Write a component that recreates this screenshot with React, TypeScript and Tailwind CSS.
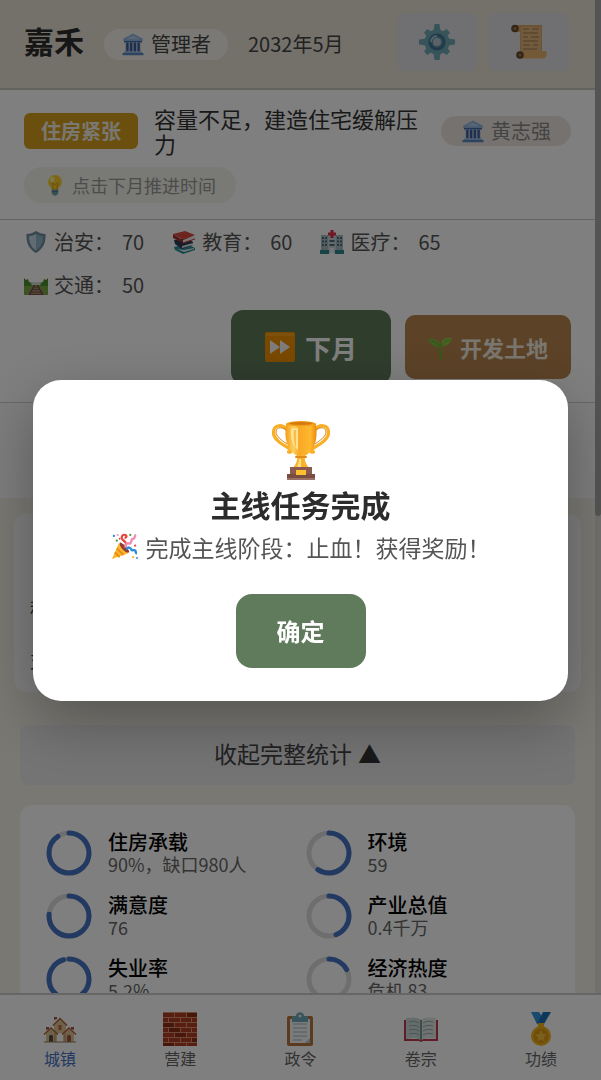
import { useState } from 'react'
import type { ReactNode } from 'react'

interface IconProps {
  className?: string
}

interface Metric {
  label: string
  value: string
  percent: number
}

const metrics: Metric[] = [
  { label: '住房承载', value: '90%，缺口980人', percent: 90 },
  { label: '环境', value: '59', percent: 59 },
  { label: '满意度', value: '76', percent: 76 },
  { label: '产业总值', value: '0.4千万', percent: 44 },
  { label: '失业率', value: '5.2%', percent: 95 },
  { label: '经济热度', value: '危机 83', percent: 17 },
]

function BankIcon({ className }: IconProps) {
  return (
    <svg viewBox="0 0 32 32" className={className} aria-hidden="true">
      <path d="M16 2 29 9v3H3V9z" fill="#8fb4de" />
      <path d="M16 4.500 25 9.500H7z" fill="#b5cdea" />
      <path d="M4 12h24v2H4z" fill="#3f6aa8" />
      <path d="M6 14h20v12H6z" fill="#a9bedb" />
      <path d="M7 14h3v12H7zM12 14h3v12h-3zM17 14h3v12h-3zM22 14h3v12h-3z" fill="#3c5d9a" />
      <path d="M4 26h24v2H4z" fill="#8fb4de" />
      <path d="M2 28h28v3H2z" fill="#5b86c0" />
    </svg>
  )
}

function GearIcon({ className }: IconProps) {
  return (
    <svg viewBox="0 0 36 36" className={className} aria-hidden="true">
      <g fill="#6fa9b5">
        <path d="M15.500 0h5l1 7h-7zM15.500 36h5l1-7h-7zM0 15.500v5l7 1v-7zM36 15.500v5l-7 1v-7z" />
        <path d="M5 8.500 8.500 5l5.500 4-5 5zM31 8.500 27.500 5 22 9l5 5zM5 27.500 8.500 31l5.500-4-5-5zM31 27.500 27.500 31 22 27l5-5z" />
        <circle cx="18" cy="18" r="12.500" />
      </g>
      <circle cx="18" cy="18" r="9" fill="#5a92a4" />
      <circle cx="18" cy="18" r="7" fill="none" stroke="#3e6f91" strokeWidth="2" />
      <path d="M12 18a6 6 0 0 1 6-6" fill="none" stroke="#9ac8d4" strokeWidth="2" />
      <circle cx="18" cy="18" r="4" fill="#b9c4cc" />
    </svg>
  )
}

function ScrollIcon({ className }: IconProps) {
  return (
    <svg viewBox="0 0 36 36" className={className} aria-hidden="true">
      <path d="M4 1h27v27H9V8H4z" fill="#d9a766" />
      <path d="M10 3h20v25H10z" fill="#e3b77c" />
      <path d="M9 27h26c1.500 2 .500 6-2 7.500H9z" fill="#e6b26c" />
      <circle cx="4" cy="4.500" r="3.800" fill="#68482c" />
      <circle cx="4" cy="4.500" r="1.600" fill="#a6794a" />
      <circle cx="9" cy="31" r="3.800" fill="#68482c" />
      <circle cx="9" cy="31" r="1.600" fill="#a6794a" />
      <path
        d="M12 5h6m3 0h7M12 9h15M12 13h5m3 0h8M12 17h15M12 21h7m3 0h5M12 25h14"
        stroke="#a37b4c"
        strokeWidth="1.200"
      />
    </svg>
  )
}

function BulbIcon({ className }: IconProps) {
  return (
    <svg viewBox="0 0 24 24" className={className} aria-hidden="true">
      <path d="M12 1a7.500 7.500 0 0 0-7.500 7.500c0 4 3.500 5.500 4 9h7c.500-3.500 4-5 4-9A7.500 7.500 0 0 0 12 1z" fill="#f6cf2c" />
      <path d="M10 17 9 10l3 1.500 3-1.500-1 7" fill="none" stroke="#e0951b" />
      <ellipse cx="9" cy="6" rx="2.500" ry="3" fill="#fff08c" />
      <path d="M8.500 17h7v4l-2 2.500h-3l-2-2.500z" fill="#6fa0a8" />
      <path d="M8.500 19h7" stroke="#4b7780" />
    </svg>
  )
}

function ShieldIcon({ className }: IconProps) {
  return (
    <svg viewBox="0 0 24 24" className={className} aria-hidden="true">
      <path d="M12 1c3 2 6 3 9.500 3 .500 9-2.500 15-9.500 19C5 19 2 13 2.500 4 6 4 9 3 12 1z" fill="#6f8f9c" />
      <path d="M12 4c2.500 1.300 4.500 2 7 2.300C19 13 16.500 17.500 12 20.500z" fill="#8fb4c6" />
      <path d="M12 4c-2.500 1.300-4.500 2-7 2.300C5 13 7.500 17.500 12 20.500z" fill="#c0d8e2" />
    </svg>
  )
}

function BooksIcon({ className }: IconProps) {
  return (
    <svg viewBox="0 0 24 24" className={className} aria-hidden="true">
      <path d="m2 17 13-3 8 4v2l-12 4-8-4z" fill="#2b8f9e" />
      <path d="m5 19 7 3 10-3v-1l-10 2z" fill="#e8e8e8" />
      <path d="m2 10 12-2 7 4v3l-11 4-7-5z" fill="#2d3f52" />
      <path d="m10 16 11-3v2l-11 3z" fill="#dfe3e6" />
      <path d="m1 4 12-3 10 4-11 5z" fill="#d84a3f" />
      <path d="M1 4v4l10 5v-3z" fill="#a8322b" />
      <path d="m11 10 12-4v3l-12 4z" fill="#eceff1" />
      <path d="m11 13 12-4" stroke="#c0392b" />
    </svg>
  )
}

function HospitalIcon({ className }: IconProps) {
  return (
    <svg viewBox="0 0 24 24" className={className} aria-hidden="true">
      <path d="M1 5h22v18H1z" fill="#a9b8be" />
      <path d="M8 3h8v20H8z" fill="#c6d0d4" />
      <path
        d="M2 7h2v2H2zM5 7h2v2H5zM2 10.500h2v2H2zM5 10.500h2v2H5zM2 14h2v2H2zM5 14h2v2H5zM17 7h2v2h-2zM20 7h2v2h-2zM17 10.500h2v2h-2zM20 10.500h2v2h-2zM17 14h2v2h-2zM20 14h2v2h-2zM9.500 10h5v2h-5zM9.500 14h5v2h-5z"
        fill="#4b6f80"
      />
      <path d="M10 18h4v5h-4z" fill="#e8eef0" />
      <path d="M0 20h9v4H0zM15 20h9v4h-9z" fill="#2f8a8f" />
      <path d="M10.500 0h3v2.500H16v3h-2.500V8h-3V5.500H8v-3h2.500z" fill="#e02e4c" />
    </svg>
  )
}

function RailwayIcon({ className }: IconProps) {
  return (
    <svg viewBox="0 0 24 24" className={className} aria-hidden="true">
      <path d="M0 9h24v13H0z" fill="#77a844" />
      <path d="M6 9h12v3H6z" fill="#cfdcd0" />
      <path d="m0 5 2 2 2-1 1 3 2 1 1 3H0zM24 5l-2 2-2-1-1 3-2 1-1 3h8z" fill="#4f8a2d" />
      <path d="M10 12h4l8 10H2z" fill="#a08c74" />
      <path d="M10.500 12 5 22M13.500 12 19 22" stroke="#54473c" strokeWidth="1.200" />
      <path d="M9.500 14h5M8.500 16.500h7M7 19h10M5.500 21.500h13" stroke="#7a4c35" strokeWidth="1.200" />
    </svg>
  )
}

function FastForwardIcon({ className }: IconProps) {
  return (
    <svg viewBox="0 0 30 30" className={className} aria-hidden="true">
      <rect width="30" height="30" rx="2" fill="#f59200" />
      <path d="M1 1h28v3H1z" fill="#ffb031" opacity=".5" />
      <path d="m5 8 10 7-10 7zM15 8l10 7-10 7z" fill="#fafafa" />
    </svg>
  )
}

function SeedlingIcon({ className }: IconProps) {
  return (
    <svg viewBox="0 0 24 24" className={className} aria-hidden="true">
      <path d="M13 23c-1-6-1-9 1-13" fill="none" stroke="#6fae35" strokeWidth="2.500" strokeLinecap="round" />
      <path d="M13 12C10 13 3 12 0 4c7-1 12 1 13 8z" fill="#7cba3c" />
      <path d="M13 11c0-6 3-9 11-8-2 6-5 8-11 8z" fill="#8fca45" />
      <path d="M13 11c2-3 5-5 8-6M12 11C9 8 6 6 3 6" fill="none" stroke="#5f9b2f" strokeWidth=".800" />
    </svg>
  )
}

function TrophyIcon({ className }: IconProps) {
  return (
    <svg viewBox="0 0 60 60" className={className} aria-hidden="true">
      <defs>
        <linearGradient id="cup" x1="0" x2="1">
          <stop offset="0" stopColor="#f59a12" />
          <stop offset=".25" stopColor="#fdd060" />
          <stop offset=".45" stopColor="#f9a825" />
          <stop offset=".8" stopColor="#ffb92e" />
          <stop offset="1" stopColor="#e98a10" />
        </linearGradient>
      </defs>
      <path
        d="M16 10C12 4 3 4 2.500 12c-.500 7 8 12 15 16 4 3 3 5 0 4M44 10c4-6 13-6 13.500 2 .500 7-8 12-15 16-4 3-3 5 0 4"
        fill="none"
        stroke="#f9ae24"
        strokeWidth="3.200"
        strokeLinecap="round"
      />
      <path d="M16 11C13 7 5 6 5 12c0 4 5 8 11 12M44 11c3-4 11-5 11 1 0 4-5 8-11 12" fill="none" stroke="#d98216" />
      <path d="M15 4c2-3 28-3 30 0 2 16-1 26-11 32h-8C16 30 13 20 15 4z" fill="url(#cup)" />
      <path d="M15 4c2-4 28-4 30 0-3 3-27 3-30 0z" fill="#f2a01c" />
      <ellipse cx="30" cy="3.500" rx="12" ry="1.500" fill="#d5780e" />
      <path d="M20 9c3-1 5-1 7-1v22c-5-3-8-12-7-21z" fill="#ffe9a8" opacity=".8" />
      <path d="M23 10h2v18c-2-4-3-12-2-18z" fill="#f9ae24" opacity=".7" />
      <path d="M26 35h8c-1 5 1 9 4 13H22c3-4 5-8 4-13z" fill="#fbb12a" />
      <path d="M25 37h10" stroke="#e08c1a" strokeWidth="2" strokeLinecap="round" />
      <path d="M28 39h2v8h-4c1-2 2-5 2-8z" fill="#ffe08a" />
      <path d="M19 47h22v8H19z" fill="#8a5a4e" />
      <path d="M16 54h28v5H16z" fill="#7a4d43" />
      <path d="M16 58h28v2H16z" fill="#9b7166" />
      <path d="M25 50h10v5H25z" fill="#fdc02f" />
    </svg>
  )
}

function PartyIcon({ className }: IconProps) {
  return (
    <svg viewBox="0 0 28 28" className={className} aria-hidden="true">
      <path d="M8 11 1 27l17-6c-2-5-6-9-10-10z" fill="#fbb62c" />
      <path d="m6 16 7 7M4 20l5 5" stroke="#e98b1b" strokeWidth="2" />
      <path d="M9 10c2-1 10 7 10 10-3 2-11-6-10-10z" fill="#8c3e36" />
      <path d="M14 15c3-4 1-6-2-8-2-3 0-6 3-5 2 1 1 3-1 3" fill="none" stroke="#e8453c" strokeWidth="2.200" />
      <path d="M15 15c0-4 2-5 4-4 3 0 1-5 4-5 2 0 1-3 3-4" fill="none" stroke="#ef8fb5" strokeWidth="2.500" />
      <path d="M16 17c2-3 4-2 5 0s3 0 4 1 0 3 2 3" fill="none" stroke="#2c8fd6" strokeWidth="2.500" />
      <circle cx="3" cy="3" r="1.200" fill="#2c8fd6" />
      <circle cx="7" cy="2" r="1" fill="#ef8fb5" />
      <circle cx="6" cy="8" r="1.200" fill="#43a047" />
      <circle cx="20" cy="2" r="1.200" fill="#43a047" />
      <circle cx="25" cy="13" r="1.200" fill="#e8453c" />
      <circle cx="23" cy="25" r="1.200" fill="#fbb62c" />
      <circle cx="27" cy="26" r="1" fill="#2c8fd6" />
      <circle cx="9" cy="6" r="1" fill="#e8453c" />
    </svg>
  )
}

function HousesIcon({ className }: IconProps) {
  return (
    <svg viewBox="0 0 34 34" className={className} aria-hidden="true">
      <path d="m17 7 6 5v9H11v-9z" fill="#dcc59a" />
      <path d="M3 21 8 16.500l6 4.500v9H3zM20 21l6-4.500 5 4.500v9H20z" fill="#dcc59a" />
      <path d="M11 21h12v9h-2v-9h-8v9h-2z" fill="#c9a878" />
      <path d="M11 8V5h3v2M3 18v-3h3v2M28 17v-2h3v3" fill="#9c5a3b" />
      <path d="m10 13.500 7-7 7 7M1 22.500 8 16l7 6.500M19 22.500 26 16l7 6.500" fill="none" stroke="#b4633a" strokeWidth="1.500" />
      <path d="M15.500 13h3v5h-3z" fill="#c9682f" />
      <path d="M6 30v-5c0-3 4-3 4 0v5z" fill="#5c4a42" />
      <path d="M24 30v-5c0-3 4-3 4 0v5z" fill="#a3583a" />
      <path d="M1 30h32" stroke="#8d7a5c" />
    </svg>
  )
}

function BricksIcon({ className }: IconProps) {
  return (
    <svg viewBox="0 0 34 34" className={className} aria-hidden="true">
      <rect width="34" height="34" fill="#d9906f" />
      <path
        d="M0 1h11v4H0zM12 1h11v4H12zM24 1h10v4H24zM0 6h5v4H0zM6 6h11v4H6zM18 6h10v4H18zM29 6h5v4h-5zM0 11h11v4H0zM12 11h11v4H12zM24 11h10v4H24zM0 16h5v4H0zM6 16h11v4H6zM18 16h10v4H18zM29 16h5v4h-5zM0 21h11v4H0zM12 21h11v4H12zM24 21h10v4H24zM0 26h5v4H0zM6 26h11v4H6zM18 26h10v4H18zM29 26h5v4h-5zM0 31h11v3H0zM12 31h11v3H12zM24 31h10v3H24z"
        fill="#b33d24"
      />
      <path d="M24 1h10v4H24zM0 11h11v4H0zM12 21h11v4H12zM29 26h5v4h-5zM0 31h11v3H0zM6 16h11v4H6z" fill="#8f2c1a" />
    </svg>
  )
}

function ClipboardIcon({ className }: IconProps) {
  return (
    <svg viewBox="0 0 34 34" className={className} aria-hidden="true">
      <rect x="4" y="4" width="26" height="30" rx="2" fill="#b8743a" />
      <path d="M7 7h20v24H7z" fill="#f3f6f8" />
      <path d="M22 31h5v-5z" fill="#b9c6cd" />
      <path d="M10 12h14M10 16h14M10 20h14M10 24h14M10 28h9" stroke="#a7b8c2" />
      <path d="M9 4h4c0-5 8-5 8 0h4v6H9z" fill="#6fa8b8" />
      <circle cx="17" cy="4" r="1.500" fill="#e8f0f2" />
    </svg>
  )
}

function OpenBookIcon({ className }: IconProps) {
  return (
    <svg viewBox="0 0 34 34" className={className} aria-hidden="true">
      <path d="M0 8h2v19h13l2 1 2-1h13V8h2v21H19l-2 1-2-1H0z" fill="#c23a4a" />
      <path d="M2 6c6-1 12-1 15 2v20c-4-2-10-2-15-1z" fill="#c9dbd6" />
      <path d="M32 6c-6-1-12-1-15 2v20c4-2 10-2 15-1z" fill="#dde5e2" />
      <path d="M17 8v20" stroke="#5c7f79" strokeWidth="1.500" />
      <path
        d="M5 10c4-1 7-1 10 1M5 14c4-1 7-1 10 1M5 18c4-1 7-1 10 1M5 22c4-1 7-1 10 1M29 10c-4-1-7-1-10 1M29 14c-4-1-7-1-10 1M29 18c-4-1-7-1-10 1M29 22c-4-1-7-1-10 1"
        fill="none"
        stroke="#93aaa5"
      />
    </svg>
  )
}

function MedalIcon({ className }: IconProps) {
  return (
    <svg viewBox="0 0 34 34" className={className} aria-hidden="true">
      <path d="M7 0h8l4 6-3 7-3-1z" fill="#2f95dc" />
      <path d="M27 0h-8l-6 12h7z" fill="#1c6fb8" />
      <path d="M14 11h6v4h-6z" fill="#f2b01e" />
      <circle cx="17" cy="24" r="10" fill="#f4b51c" />
      <circle cx="17" cy="24" r="7.500" fill="#e39a12" />
      <path d="m17 18 1.800 4 4.200.400-3.200 2.800 1 4.300-3.800-2.300-3.800 2.300 1-4.300-3.200-2.800 4.200-.400z" fill="#f6c13a" />
    </svg>
  )
}

const services = [
  { label: '治安：', value: 70, icon: ShieldIcon },
  { label: '教育：', value: 60, icon: BooksIcon },
  { label: '医疗：', value: 65, icon: HospitalIcon },
  { label: '交通：', value: 50, icon: RailwayIcon },
]

const tabs = [
  { label: '城镇', icon: HousesIcon },
  { label: '营建', icon: BricksIcon },
  { label: '政令', icon: ClipboardIcon },
  { label: '卷宗', icon: OpenBookIcon },
  { label: '功绩', icon: MedalIcon },
]

function Ring({ percent }: { percent: number }) {
  const length = 2 * Math.PI * 20
  return (
    <svg viewBox="0 0 46 46" className="size-[46px] shrink-0 -rotate-90" aria-hidden="true">
      <circle cx="23" cy="23" r="20" fill="none" stroke="#dddddd" strokeWidth="5" />
      <circle
        cx="23"
        cy="23"
        r="20"
        fill="none"
        stroke="#4472c4"
        strokeWidth="5"
        strokeLinecap="round"
        strokeDasharray={`${(length * percent) / 100} ${length}`}
      />
    </svg>
  )
}

function SquareButton({ label, children }: { label: string; children: ReactNode }) {
  return (
    <button
      type="button"
      aria-label={label}
      className="flex h-[58px] w-20 items-center justify-center rounded-lg bg-[#e0e0e4]"
    >
      {children}
    </button>
  )
}

export default function App() {
  const [dialogOpen, setDialogOpen] = useState(true)
  const [activeTab, setActiveTab] = useState('城镇')

  return (
    <div className="relative flex h-screen flex-col bg-[#f4f0e6] font-['Noto_Sans_CJK_SC',sans-serif] text-[#333333]">
      <div className="flex min-h-0 flex-1">
        <main className="min-w-0 flex-1 overflow-y-auto [scrollbar-width:none]">
          {/* Top bar */}
          <header className="flex h-[90px] items-center border-b-2 border-[#c8c4bc] bg-[#e9e3d6] pr-[26px] pl-6">
            <h1 className="pb-2 text-[30px] leading-9 font-bold text-[#2c2c2c]">嘉禾</h1>
            <div className="ml-5 flex h-[31px] items-center gap-1.5 rounded-full bg-[#f5f3ea] px-[17px] text-xl text-[#444444]">
              <BankIcon className="size-[24px]" />
              管理者
            </div>
            <span className="ml-5 text-xl text-[#444444]">2032年5月</span>
            <div className="ml-auto flex gap-3 pb-1">
              <SquareButton label="设置">
                <GearIcon className="size-9" />
              </SquareButton>
              <SquareButton label="日志">
                <ScrollIcon className="size-9" />
              </SquareButton>
            </div>
          </header>

          {/* Status */}
          <section className="border-b border-[#c4c4c4] bg-white pt-4 pr-6 pb-4 pl-6">
            <div className="flex items-center">
              <span className="flex h-9 items-center rounded-md bg-[#d69e1c] px-[17px] text-xl font-bold text-[#f4f0e4]">
                住房紧张
              </span>
              <p className="ml-4 min-w-0 flex-1 text-[22px] leading-[25px]">容量不足，建造住宅缓解压力</p>
              <div className="ml-5 flex h-[30px] shrink-0 items-center gap-1.5 rounded-full bg-[#ece5df] px-5 text-xl text-[#888888]">
                <BankIcon className="size-[24px]" />
                黄志强
              </div>
            </div>
            <div className="mt-[11px] flex h-9 w-fit items-center gap-1.5 rounded-full bg-[#f2f2ea] px-5 text-lg text-[#999999]">
              <BulbIcon className="size-[22px]" />
              点击下月推进时间
            </div>
          </section>

          {/* Services and actions */}
          <section className="bg-white pt-2 pb-[18px]">
            <ul className="flex flex-wrap gap-x-7 gap-y-[15px] px-6 text-xl leading-7 text-[#555555]">
              {services.map(({ label, value, icon: Icon }) => (
                <li key={label} className="flex items-center">
                  <Icon className="size-[24px]" />
                  <span className="ml-1.5">{label}</span>
                  <span className="ml-2">{value}</span>
                </li>
              ))}
            </ul>
            <div className="mt-[11px] flex items-center justify-end gap-[14px] pr-6">
              <button
                type="button"
                className="flex h-[74px] w-40 items-center justify-center gap-2.5 rounded-xl bg-[#5f7b5b] text-[26px] font-bold text-white"
              >
                <FastForwardIcon className="size-[30px]" />
                下月
              </button>
              <button
                type="button"
                className="flex h-16 w-[166px] items-center justify-center gap-2 rounded-[10px] bg-[#b8864f] text-[22px] font-bold text-[#f4ece0]"
              >
                <SeedlingIcon className="size-[24px]" />
                开发土地
              </button>
            </div>
          </section>
          <div className="h-24 border-t border-[#d0d0d0] bg-[#fafafa]" />

          {/* Finance summary */}
          <dl className="mx-3.5 mt-4 h-[178px] rounded-xl bg-[#fafafa] px-4 pt-20 text-lg leading-7">
            <dt>税收</dt>
            <dt className="mt-6">支出</dt>
          </dl>

          <div className="px-5">
            <button
              type="button"
              className="mt-[33px] flex h-[60px] w-full items-center justify-center gap-1.5 rounded-lg bg-[#e8e8ea] pb-1 text-[23px] text-[#444444]"
            >
              收起完整统计 <span className="text-[#333333]">▲</span>
            </button>

            <ul className="mt-5 grid grid-cols-2 gap-x-4 gap-y-[17px] rounded-xl bg-white px-[26px] py-[25px]">
              {metrics.map((metric) => (
                <li key={metric.label} className="flex items-center gap-4">
                  <Ring percent={metric.percent} />
                  <div>
                    <div className="text-xl leading-[22px] font-medium text-black">{metric.label}</div>
                    <div className="text-lg leading-[22px] text-[#666666]">{metric.value}</div>
                  </div>
                </li>
              ))}
            </ul>
          </div>
        </main>

        {/* Scroll track */}
        <div className="w-1.5 bg-[#e2e0dc]">
          <div className="h-[52%] rounded-b-sm bg-[#a8a8a8]" />
        </div>
      </div>

      <nav className="grid h-[87px] shrink-0 grid-cols-5 border-t-2 border-[#cccccc] bg-white">
        {tabs.map(({ label, icon: Icon }) => (
          <button
            key={label}
            type="button"
            onClick={() => setActiveTab(label)}
            className={`flex flex-col items-center justify-center pt-1.5 text-base ${
              activeTab === label ? 'text-[#4472c4]' : 'text-[#666666]'
            }`}
          >
            <Icon className="size-[34px]" />
            {label}
          </button>
        ))}
      </nav>

      {dialogOpen && (
        <div className="fixed inset-0 flex items-center justify-center bg-black/50 px-[33px]">
          <div
            role="dialog"
            aria-modal="true"
            aria-labelledby="dialog-title"
            className="flex w-full flex-col items-center rounded-[28px] bg-white px-8 pt-10 pb-[33px] shadow-[0_20px_60px_rgba(0,0,0,0.3)]"
          >
            <TrophyIcon className="size-[60px]" />
            <h2 id="dialog-title" className="mt-1 text-[30px] leading-10 font-bold text-[#2c2c2c]">
              主线任务完成
            </h2>
            <p className="mt-[7px] flex items-center gap-2 text-[23px] leading-8 text-[#555555]">
              <PartyIcon className="size-[27px] shrink-0" />
              完成主线阶段：止血！获得奖励！
            </p>
            <button
              type="button"
              onClick={() => setDialogOpen(false)}
              className="mt-[31px] h-[74px] w-[130px] rounded-2xl bg-[#5f7b5b] text-2xl font-bold text-white"
            >
              确定
            </button>
          </div>
        </div>
      )}
    </div>
  )
}
